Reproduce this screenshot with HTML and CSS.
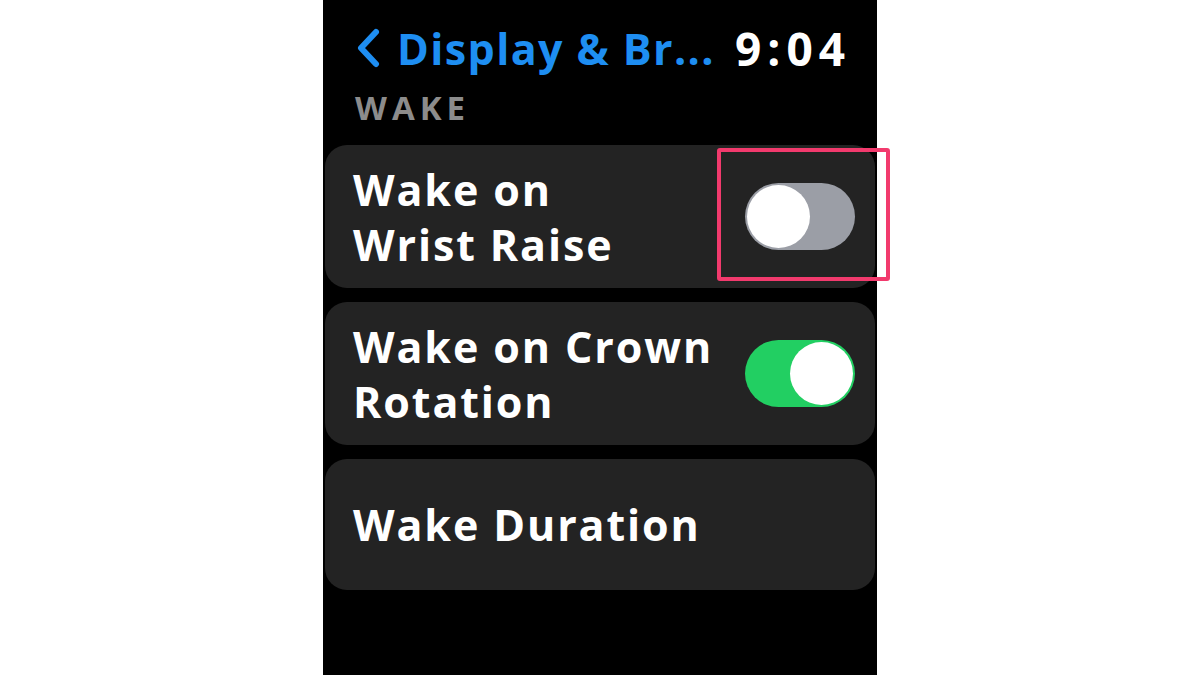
FILE: index.html
```html
<!DOCTYPE html>
<html lang="en">
<head>
    <meta charset="UTF-8">
    <meta name="viewport" content="width=device-width, initial-scale=1.0">
    <title>Display &amp; Brightness - Wake</title>
    <link rel="stylesheet" href="styles.css">
</head>
<body>

<div class="watch">
    <header class="nav">
        <a class="back" href="#">
            <svg class="chevron" viewBox="0 0 26 40" width="26" height="40">
                <path d="M21 4 L6 20 L21 36" fill="none" stroke="#1e8ef2" stroke-width="6" stroke-linecap="round" stroke-linejoin="round"/>
            </svg>
            <span class="back-title">Display &amp; Br...</span>
        </a>
        <span class="clock">9:04</span>
    </header>

    <h2 class="section">WAKE</h2>

    <ul class="list">
        <li class="row">
            <span class="label">Wake on<br>Wrist Raise</span>
            <span class="toggle"><span class="knob"></span></span>
            <span class="highlight"></span>
        </li>
        <li class="row">
            <span class="label">Wake on Crown<br>Rotation</span>
            <span class="toggle on"><span class="knob"></span></span>
        </li>
        <li class="row single">
            <span class="label">Wake Duration</span>
        </li>
    </ul>
</div>

</body>
</html>
```

FILE: styles.css
```css
body {
    margin: 0;
    background-color: #ffffff;
    font-family: "Open Sans", "Liberation Sans", sans-serif;
    display: flex;
    justify-content: center;
}

.watch {
    width: 554px;
    height: 675px;
    background-color: #000000;
    padding: 22px 2px 0 2px;
    box-sizing: border-box;
}

.nav {
    display: flex;
    align-items: center;
    justify-content: space-between;
    padding: 0 30px 0 30px;
    height: 52px;
}

.back {
    display: flex;
    align-items: center;
    gap: 16px;
    text-decoration: none;
}

.back-title {
    color: #1e8ef2;
    font-size: 43px;
    font-weight: 700;
    letter-spacing: 1.4px;
}

.clock {
    color: #ffffff;
    font-size: 46px;
    font-weight: 700;
    letter-spacing: 6px;
    margin-right: -6px;
}

.section {
    margin: 12px 0 0 30px;
    color: #8c8c8c;
    font-size: 33px;
    font-weight: 700;
    letter-spacing: 5px;
    line-height: 44px;
    height: 44px;
}

.list {
    list-style: none;
    margin: 15px 0 0 0;
    padding: 0;
    display: flex;
    flex-direction: column;
    gap: 14px;
}

.row {
    position: relative;
    display: flex;
    align-items: center;
    justify-content: space-between;
    background-color: #232323;
    border-radius: 22px;
    height: 143px;
    padding: 0 20px 0 28px;
    box-sizing: border-box;
}

.row.single {
    height: 131px;
}

.label {
    color: #ffffff;
    font-size: 43px;
    font-weight: 700;
    letter-spacing: 1.9px;
    line-height: 55px;
}

.toggle {
    position: relative;
    width: 110px;
    height: 67px;
    border-radius: 34px;
    background-color: #9b9ea6;
    flex-shrink: 0;
}

.toggle.on {
    background-color: #22cf62;
}

.knob {
    position: absolute;
    top: 2px;
    left: 2px;
    width: 63px;
    height: 63px;
    border-radius: 50%;
    background-color: #ffffff;
}

.toggle.on .knob {
    left: 45px;
}

/* pink frame drawn over the first switch */
.highlight {
    position: absolute;
    top: 3px;
    left: 392px;
    width: 173px;
    height: 133px;
    border: 4px solid #f23a6d;
    border-radius: 3px;
    box-sizing: border-box;
}
```
